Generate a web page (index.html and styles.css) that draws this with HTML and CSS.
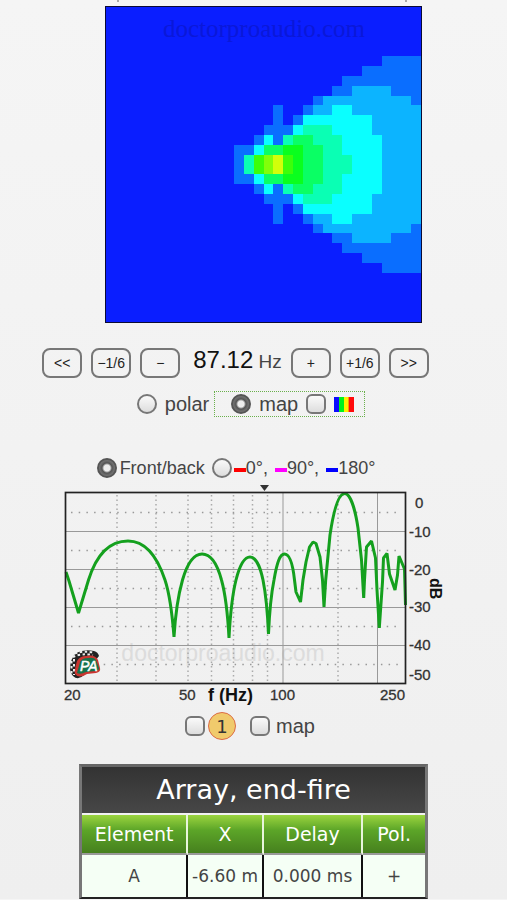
FILE: index.html
```html
<!DOCTYPE html>
<html lang="en">
<head>
<meta charset="utf-8">
<meta name="viewport" content="width=device-width, initial-scale=1">
<title>Array, end-fire</title>
<link rel="stylesheet" href="styles.css">
</head>
<body>
<main class="page">
  <div class="ticks"><i></i><i></i></div>

  <svg class="map" viewBox="0 0 317 317" role="img" aria-label="Coverage map">
    <rect x="0" y="0" width="317" height="317" fill="#0b0b35"/>
    <svg x="1" y="1" width="315" height="315" viewBox="0 0 32 32" shape-rendering="crispEdges">
      <defs>
        <g id="half">
          <path fill="#0a6eff" d="M28 5h4v1h-4zM26 6h6v1h-6zM24 7h8v1h-8zM23 8h9v1h-9zM21 9h11v1h-11zM17 10h1v2h-1zM20 10h1v1h-1zM19 11h1v1h-1zM16 12h3v1h-3zM15 13h3v1h-3zM13 14h2v2h-2z"/>
          <path fill="#0cb4ff" d="M25 8h4v1h-4zM22 9h9v1h-9zM21 10h11v1h-11zM27 11h5v5h-5z"/>
          <path fill="#0affff" d="M23 10h2v1h-2zM20 11h7v1h-7zM19 12h8v1h-8zM16 13h1v1h-1zM24 13h4v3h-4zM15 14h1v1h-1z"/>
          <path fill="#0affb4" d="M20 12h3v1h-3zM18 13h6v1h-6zM22 14h2v1h-2zM22 15h3v1h-3zM14 15h1v1h-1z"/>
          <path fill="#0aff64" d="M19 13h2v1h-2zM16 14h6v1h-6zM20 15h2v1h-2z"/>
          <path fill="#0aff1e" d="M18 14h2v2h-2z"/>
          <path fill="#3cff0a" d="M15 15h1v1h-1zM18 15h1v1h-1z"/>
          <path fill="#82ff0a" d="M16 15h1v1h-1z"/>
          <path fill="#d2ff0a" d="M17 15h1v1h-1z"/>
        </g>
      </defs>
      <rect width="32" height="32" fill="#0a1eff"/>
      <use href="#half"/>
      <use href="#half" transform="matrix(1 0 0 -1 0 32)"/>
    </svg>
    <text class="map-mark" x="159" y="31" text-anchor="middle">doctorproaudio.com</text>
  </svg>

  <div class="row tuning">
    <button type="button">&lt;&lt;</button>
    <button type="button">−1/6</button>
    <button type="button">−</button>
    <output class="freq"><b>87.12</b> Hz</output>
    <button type="button">+</button>
    <button type="button">+1/6</button>
    <button type="button">&gt;&gt;</button>
  </div>

  <div class="row views">
    <label class="choice"><input type="radio" name="view">polar</label>
    <div class="active">
      <label class="choice"><input type="radio" name="view" checked>map</label>
      <label class="choice"><input type="checkbox"><svg width="20" height="15" role="img" aria-label="colours" shape-rendering="crispEdges"><path fill="#0a0aff" d="M0 0h5v15H0z"/><path fill="#00f01e" d="M5 0h5v15H5z"/><path fill="#fff000" d="M10 0h4v15h-4z"/><path fill="#ff9600" d="M14 0h1v15h-1z"/><path fill="#ff0a0a" d="M15 0h5v15h-5z"/></svg></label>
    </div>
  </div>

  <div class="row angles">
    <label><input type="radio" name="angle" checked>Front/back</label>
    <label><input type="radio" name="angle"><i class="key red"></i>0°,</label>
    <span><i class="key pink"></i>90°,</span>
    <span><i class="key blue"></i>180°</span>
  </div>

  <svg class="chart" viewBox="60 484 386 222" role="img" aria-label="Level in dB against frequency">
    <path d="M260 485h9l-4.500 6z" fill="#333"/>
    <text class="chart-mark" x="223" y="661" text-anchor="middle">doctorproaudio.com</text>
    <g fill="none" stroke="#999" stroke-width="1">
      <path d="M66 531.500H405M66 569.500H405M66 607.500H405M66 645.500H405M283 493V683M377.500 493V683"/>
      <path stroke="#aaa" stroke-width="1.500" stroke-dasharray="1.500 3" d="M117 495V683M156 495V683M188 495V683M211.500 495V683M233.500 495V683M252.500 495V683M267.500 495V683M338 495V683"/>
      <path stroke="#999" stroke-width="1.500" stroke-dasharray="1.500 6.200" d="M71 512.500H402M71 550.500H402M71 588.500H402M71 626.500H402M96 664.500H402"/>
    </g>
    <path class="curve" d="M66 572L69 581L78.500 613L88.500 580C96 556 109 541 128 541C146 541 157 556 165 580Q171 598 174 637Q176 603 182.500 580C188 561 195 554 202 554C210 554 217 563 221.500 580Q227 600 229 638Q231 600 236 580C240 564 245 557 250 557C255 557 260 565 263 580Q267 600 268.500 634Q270 600 274 580C277 562 280 554 284.500 554C290 554 293 566 294.500 580L296 592L300.500 602L303 580L306 562L309.500 547L313 542L316 543.500L320 557L322.500 580L324 607L325.700 580L330 535C334 508 339 493.500 344.700 493.500C350 493.500 355 508 358 528L361.500 560L363.700 598L364.500 580L366.500 547L371.500 541L375.500 558L377 590L379.300 628L382.500 582L383.500 558L387 553.500L389.500 574L395 590L397.500 575L399 556L404.500 569L405.500 605"/>
    <rect x="65.500" y="492.500" width="340" height="191" fill="none" stroke="#222" stroke-width="1.700"/>
    <g>
      <path fill="#222" d="M70 669q0-10 6-16q8-4 18-2q4 1 5 5l-15 19q-6 6-11 1q-3-3-3-7z"/>
      <path stroke="#eee" stroke-width="2" stroke-dasharray="2.500 2.500" fill="none" d="M75 653.500q8-3 19-1M73 657q8-4 20-2M71.500 661v14M74 659v16"/>
      <path fill="#c93530" d="M77 661q3-5 9-5q9-2 12 4l2 8q1 4-4 5l-9 1q-8 5-12 0q-1-3 2-13z"/>
      <path fill="#16734d" d="M80 662q2-4 8-4q6-1 8 2l3 8q0 3-4 3l-9 1q-6 3-9 1z"/>
      <text class="badge" x="80" y="671">PA</text>
    </g>
    <g class="scale">
      <text x="64" y="700">20</text>
      <text x="179" y="700">50</text>
      <text x="270" y="700">100</text>
      <text x="380" y="700">250</text>
      <text x="415" y="508">0</text>
      <text x="409" y="537">-10</text>
      <text x="409" y="575">-20</text>
      <text x="409" y="612">-30</text>
      <text x="409" y="650">-40</text>
      <text x="409" y="680">-50</text>
    </g>
    <text class="axis" x="208" y="701">f (Hz)</text>
    <text class="axis unit" transform="translate(430 578) rotate(90)">dB</text>
  </svg>

  <div class="row traces">
    <label><input type="checkbox"><span class="disc">1</span></label>
    <label class="choice"><input type="checkbox">map</label>
  </div>

  <table class="array">
    <colgroup><col class="c1"><col class="c2"><col class="c3"><col class="c4"></colgroup>
    <thead>
      <tr class="title"><th colspan="4">Array, end-fire</th></tr>
      <tr class="heads"><th>Element</th><th>X</th><th>Delay</th><th>Pol.</th></tr>
    </thead>
    <tbody>
      <tr><td>A</td><td>-6.60 m</td><td>0.000 ms</td><td>+</td></tr>
    </tbody>
  </table>
</main>
</body>
</html>
```
FILE: styles.css
```css
* { box-sizing: border-box; }

body {
  margin: 0;
  background: linear-gradient(#f5f5f5, #efefef);
  color: #444;
  font-family: "Liberation Sans", Arial, sans-serif;
  font-size: 20px;
  line-height: 20px;
}

.page {
  display: flex;
  flex-direction: column;
  align-items: center;
}

.ticks {
  display: flex;
  justify-content: space-between;
  width: 100%;
  max-width: 290px;
  height: 2px;
  margin: 0 0 4px 16px;
}
.ticks i { width: 2px; background: #aaa; }

.map {
  display: block;
  width: 100%;
  max-width: 317px;
  margin-left: 20px;
}
.map-mark {
  font-family: "Liberation Serif", "Times New Roman", serif;
  font-size: 25px;
  fill: #0a18d8;
}

.row {
  display: flex;
  justify-content: center;
  align-items: center;
}
label, .row span { display: flex; align-items: center; }

.tuning { gap: 9px; margin: 25px 36px 0 0; }
.tuning button {
  width: 40px;
  height: 30px;
  padding: 0;
  border: 2px solid #777;
  border-radius: 8px;
  background: transparent;
  color: #222;
  font: 14px "Liberation Sans", Arial, sans-serif;
}
.freq { margin: 0 0 4px 4px; font-size: 19px; }
.freq b { color: #111; font-size: 24px; font-weight: 400; }

input {
  appearance: none;
  flex: none;
  width: 20px;
  height: 20px;
  margin: 0;
  border: 2px solid #777;
  background: linear-gradient(#fafafa, #ddd);
}
input[type="radio"] { border-radius: 50%; }
input[type="checkbox"] { border-radius: 6px; }
input[type="radio"]:checked {
  border-color: #555;
  background: radial-gradient(circle, #eee 0 3px, #555 5px, #777 8px);
}

.choice { gap: 8px; }
.views { gap: 5px; margin: 13px 5px 0 0; }
.active {
  display: flex;
  gap: 8px;
  height: 26px;
  padding: 0 10px 0 16px;
  border: 1px dotted #6ab04c;
}

.angles { gap: 7px; margin: 41px 35px 0 0; font-size: 18px; }
.angles input:checked { margin-right: 3px; }
.key { width: 12px; height: 4px; margin-top: 4px; }
.red { margin-left: 2px; background: #f00; }
.pink { background: #f0f; }
.blue { background: #00f; }

.chart {
  display: block;
  width: 100%;
  max-width: 386px;
  margin: 6px 1px 0 0;
}
.chart-mark { font-size: 23px; fill: #dcdcdc; }
.curve {
  fill: none;
  stroke: #14a01e;
  stroke-width: 3;
  stroke-linejoin: bevel;
}
.scale { font-size: 15px; fill: #333; stroke: #333; stroke-width: 0.3px; }
.axis { font-size: 18px; font-weight: 700; fill: #111; }
.unit { font-size: 16px; }
.badge { font-size: 14px; font-style: italic; fill: #fff; stroke: #fff; stroke-width: 0.5px; }

.traces { gap: 14px; margin: 6px 7px 0 0; }
.traces .choice { gap: 6px; }
.traces .disc {
  justify-content: center;
  width: 28px;
  height: 28px;
  margin-left: 3px;
  border: 1px solid #dc6b45;
  border-radius: 50%;
  background: #f0ca6c;
  color: #333;
  font: 18px "DejaVu Sans", Verdana, sans-serif;
}

.array {
  width: calc(100% - 16px);
  max-width: 349px;
  margin-top: 24px;
  border: 3px solid #777;
  border-top-color: #666;
  border-bottom: 2px solid #222;
  border-spacing: 0;
  table-layout: fixed;
  font-family: "DejaVu Sans", Verdana, sans-serif;
}
.array th, .array td { padding: 0; text-align: center; white-space: nowrap; }
.title th {
  height: 48px;
  border-bottom: 2px solid #f2f2f2;
  background: linear-gradient(#333, #474747);
  color: #fff;
  font-size: 27px;
  font-weight: 400;
}
.heads th {
  height: 40px;
  border-right: 2px solid #e8f5dc;
  border-bottom: 2px solid #999;
  background: linear-gradient(#9bd43f, #5ca528 40%, #46801e);
  color: #fff;
  font-size: 19px;
  font-weight: 400;
}
.array td {
  height: 42px;
  border-right: 2px solid #111;
  background: #f5fff5;
  font-size: 17px;
}
.array th:last-child, .array td:last-child { border-right: 0; }
.c1 { width: 31%; }
.c2 { width: 22%; }
.c3 { width: 29%; }
.c4 { width: 18%; }
```
